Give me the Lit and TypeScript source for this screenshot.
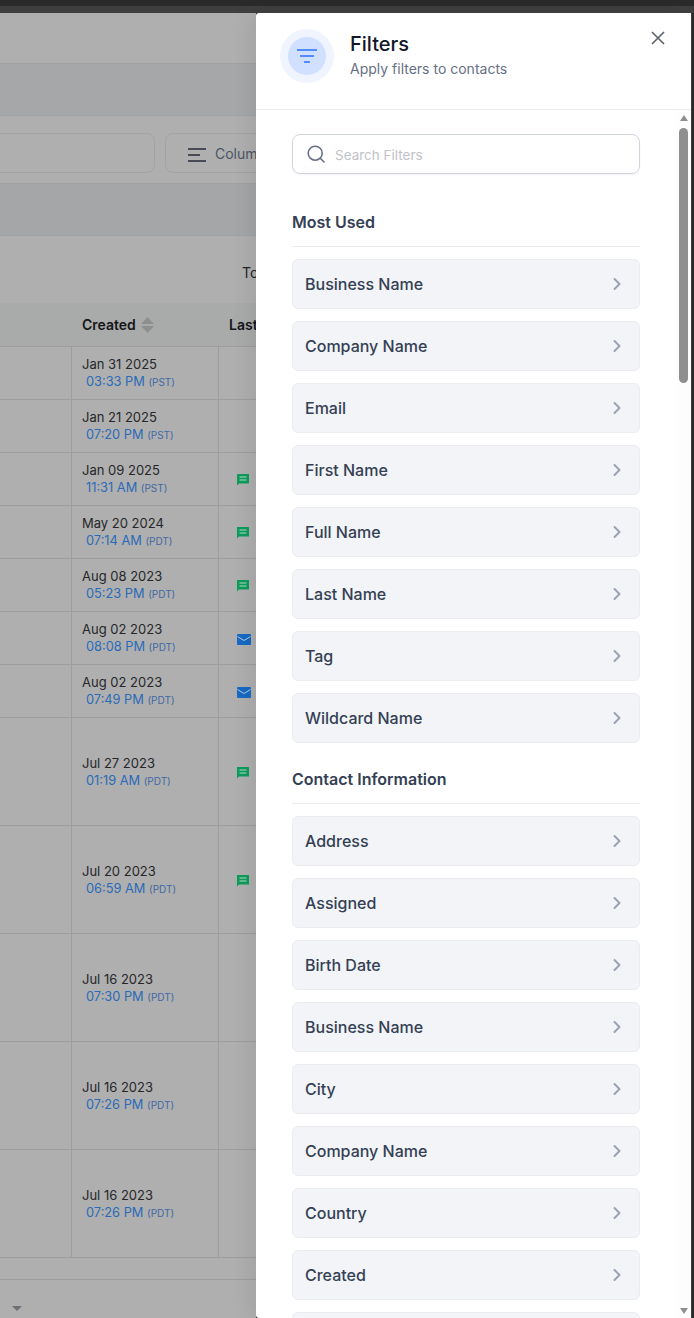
import { LitElement, html, css, svg } from "lit";
import { customElement } from "lit/decorators.js";
import { classMap } from "lit/directives/class-map.js";

const mostUsed = ["Business Name", "Company Name", "Email", "First Name", "Full Name", "Last Name", "Tag", "Wildcard Name"];
const contactInfo = ["Address", "Assigned", "Birth Date", "Business Name", "City", "Company Name", "Country", "Created", "Date of Birth"];

type Row = { d: string; t: string; z: string; h: number; icon?: "chat" | "mail" };
const rows: Row[] = [
  { d: "Jan 31 2025", t: "03:33 PM", z: "(PST)", h: 53 },
  { d: "Jan 21 2025", t: "07:20 PM", z: "(PST)", h: 53 },
  { d: "Jan 09 2025", t: "11:31 AM", z: "(PST)", h: 53, icon: "chat" },
  { d: "May 20 2024", t: "07:14 AM", z: "(PDT)", h: 53, icon: "chat" },
  { d: "Aug 08 2023", t: "05:23 PM", z: "(PDT)", h: 53, icon: "chat" },
  { d: "Aug 02 2023", t: "08:08 PM", z: "(PDT)", h: 53, icon: "mail" },
  { d: "Aug 02 2023", t: "07:49 PM", z: "(PDT)", h: 53, icon: "mail" },
  { d: "Jul 27 2023", t: "01:19 AM", z: "(PDT)", h: 108, icon: "chat" },
  { d: "Jul 20 2023", t: "06:59 AM", z: "(PDT)", h: 108, icon: "chat" },
  { d: "Jul 16 2023", t: "07:30 PM", z: "(PDT)", h: 108 },
  { d: "Jul 16 2023", t: "07:26 PM", z: "(PDT)", h: 108 },
  { d: "Jul 16 2023", t: "07:26 PM", z: "(PDT)", h: 108 },
];

const chevron = svg`<path d="M9 6l6 6-6 6" fill="none" stroke="#98a2b3" stroke-width="2.4" stroke-linecap="round" stroke-linejoin="round"/>`;

@customElement("app-root")
export class AppRoot extends LitElement {
  static styles = css`
    :host {
      display: block;
      width: 694px;
      height: 1318px;
      overflow: hidden;
      background: #2a2a2a;
      font-family: Inter, "Liberation Sans", sans-serif;
    }
    .chrome {
      height: 13px;
      box-sizing: border-box;
      border-top: 6px solid #2a2a2a;
      background: #3f3f3f;
    }
    .main {
      display: flex;
      height: 1305px;
    }
    .under {
      width: 256px;
      flex: none;
      overflow: hidden;
      background: #afafaf;
      color: #1b1c1e;
      display: flex;
      flex-direction: column;
    }
    .band { flex: none; box-sizing: border-box; border-bottom: 1px solid #a0a1a3; }
    .b1 { height: 51px; }
    .b2 { height: 52px; background: #a6a7a9; }
    .b3 {
      height: 68px;
      display: flex;
      align-items: center;
      justify-content: flex-end;
      gap: 10px;
      padding-top: 6px;
      margin-right: -59px;
    }
    .box {
      height: 40px;
      box-sizing: border-box;
      border: 1px solid #a2a3a5;
      border-radius: 8px;
    }
    .box.search { width: 190px; margin-left: -35px; }
    .box.cols {
      width: 150px;
      display: flex;
      align-items: center;
      gap: 8px;
      padding: 2px 0 0 21px;
      color: #4b5563;
      font-size: 14px;
    }
    .cols svg { margin-top: 2px; }
    .b4 { height: 52px; background: #a5a6a8; }
    .b5 {
      height: 67px;
      border: 0;
      display: flex;
      align-items: center;
      padding: 5px 0 0 242px;
      font-size: 14px;
      white-space: nowrap;
      color: #20242c;
    }
    .thead {
      height: 44px;
      flex: none;
      box-sizing: border-box;
      background: #a9abaa;
      border-bottom: 1px solid #9c9d9d;
      display: grid;
      grid-template-columns: 72px 147px 1fr;
      align-items: center;
      font-size: 14px;
      font-weight: 600;
      white-space: nowrap;
      color: #15161a;
    }
    .hcell { display: flex; align-items: center; gap: 5px; padding-left: 10px; }
    .row {
      flex: none;
      box-sizing: border-box;
      border-bottom: 1px solid #9d9d9d;
      display: grid;
      grid-template-columns: 72px 147px 1fr;
    }
    .cell { border-right: 1px solid #9d9d9d; }
    .cell:last-child { border: 0; display: flex; align-items: center; padding: 2px 0 0 18px; }
    .datecell {
      padding-left: 10px;
      display: flex;
      flex-direction: column;
      justify-content: center;
      font-size: 13px;
      line-height: 17px;
      white-space: nowrap;
      color: #26272a;
    }
    .tall .datecell { padding-top: 2px; }
    .time { padding-left: 4px; color: #2a6bb8; font-size: 12.8px; }
    .zone { font-size: 10px; color: #3f68a5; }
    .tail { height: 22px; flex: none; box-sizing: border-box; border-bottom: 1px solid #9d9d9d; }
    .foot { flex: 1; position: relative; padding: 26px 0 0 12px; }
    .caret {
      width: 0; height: 0;
      border-left: 5px solid transparent;
      border-right: 5px solid transparent;
      border-top: 5px solid #6e7075;
    }

    .panel {
      width: 435px;
      flex: none;
      background: #fff;
      border-radius: 3px 0 0 3px;
      display: flex;
      flex-direction: column;
      box-shadow: -6px 0 20px rgba(0, 0, 0, 0.08);
      position: relative;
    }
    .phead {
      height: 97px;
      flex: none;
      box-sizing: border-box;
      border-bottom: 1px solid #eaecf0;
      display: flex;
      padding: 16px 24px 0;
      gap: 16px;
    }
    .halo {
      width: 54px; height: 54px;
      border-radius: 50%;
      background: #eff4ff;
      display: flex;
      align-items: center;
      justify-content: center;
      flex: none;
    }
    .halo > div {
      width: 38px; height: 38px;
      border-radius: 50%;
      background: #d1e0ff;
      display: flex;
      align-items: center;
      justify-content: center;
    }
    .titles { flex: 1; padding-top: 2px; }
    .title { font-size: 20px; line-height: 26px; font-weight: 500; color: #101828; }
    .sub { font-size: 14px; line-height: 20px; color: #667085; margin-top: 2px; }
    .close { margin: -3px -3px 0 0; width: 24px; height: 24px; flex: none; }
    .pbody { flex: 1; display: flex; min-height: 0; }
    .content { flex: 1; overflow: hidden; padding: 24px 36px 0; min-width: 0; }
    .field {
      height: 40px;
      box-sizing: border-box;
      border: 1px solid #d0d5dd;
      border-radius: 8px;
      box-shadow: 0 1px 2px rgba(16, 24, 40, 0.05);
      display: flex;
      align-items: center;
      gap: 9px;
      padding-left: 13px;
      font-size: 13.5px;
      color: #c0c2c6;
    }
    .field span { padding-top: 2px; }
    .sec {
      font-size: 16px;
      line-height: 24px;
      font-weight: 600;
      color: #344054;
      border-bottom: 1px solid #eaecf0;
      padding-bottom: 12px;
      margin-bottom: 12px;
    }
    .sec.first { margin-top: 36px; }
    .sec.next { margin-top: 24px; }
    .list { display: flex; flex-direction: column; gap: 12px; }
    .item {
      height: 50px;
      box-sizing: border-box;
      border: 1px solid #eaecf0;
      border-radius: 6px;
      background: #f2f4f7;
      display: flex;
      align-items: center;
      justify-content: space-between;
      padding: 0 12px;
      font-size: 16px;
      font-weight: 500;
      color: #344054;
    }
    .bar {
      width: 15px;
      flex: none;
      background: #fdfdfd;
      display: flex;
      flex-direction: column;
      align-items: center;
      padding: 5px 0 4px;
      box-sizing: border-box;
    }
    .up, .down {
      width: 0; height: 0;
      border-left: 4.5px solid transparent;
      border-right: 4.5px solid transparent;
    }
    .up { border-bottom: 6px solid #8f8f8f; }
    .down { border-top: 6px solid #8f8f8f; margin-top: auto; }
    .thumb {
      width: 9px;
      height: 255px;
      border-radius: 5px;
      background: #8f8f8f;
      margin-top: 7px;
    }
    .edge { flex: 1; background: #2a2a2a; border-left: 1px solid #3f3f3f; }
  `;

  private hcols() {
    return html`<svg width="20" height="14" viewBox="0 0 20 14" fill="none" stroke="#464b55" stroke-width="2"><path d="M1 1h18M1 7h12M1 13h18"/></svg>`;
  }

  private sort() {
    return html`<svg width="13" height="16" viewBox="0 0 13 16" fill="#8d8e8e"><path d="M6.5 0L13 7H0zM0 9h13l-6.5 7z"/></svg>`;
  }

  private rowIcon(i?: "chat" | "mail") {
    if (i === "chat")
      return html`<svg width="12" height="12" viewBox="0 0 12 12"><path d="M0 0h12v9.5H2L0 11.5z" fill="#0d9c5c"/><path d="M2.5 3h7M2.5 6h7" stroke="#b9d8c8" stroke-width="1"/></svg>`;
    if (i === "mail")
      return html`<svg width="14" height="11" viewBox="0 0 14 11"><rect width="14" height="11" rx="1" fill="#1769c4"/><path d="M.5 2.5L7 6.5l6.5-4" fill="none" stroke="#b5c9df" stroke-width="1"/></svg>`;
    return "";
  }

  private item(n: string) {
    return html`<div class="item">
      <span>${n}</span>
      <svg width="20" height="20" viewBox="0 0 24 24">${chevron}</svg>
    </div>`;
  }

  render() {
    return html`
      <div class="chrome"></div>
      <div class="main">
        <div class="under">
          <div class="band b1"></div>
          <div class="band b2"></div>
          <div class="band b3">
            <div class="box search"></div>
            <div class="box cols">${this.hcols()}<span>Columns</span></div>
          </div>
          <div class="band b4"></div>
          <div class="band b5">Total</div>
          <div class="thead">
            <div></div>
            <div class="hcell">Created ${this.sort()}</div>
            <div class="hcell">Last Activity</div>
          </div>
          ${rows.map(
            (r) => html`<div class=${classMap({ row: true, tall: r.h > 53 })} style="height:${r.h}px">
              <div class="cell"></div>
              <div class="cell datecell">
                <div>${r.d}</div>
                <div class="time">${r.t} <span class="zone">${r.z}</span></div>
              </div>
              <div class="cell">${this.rowIcon(r.icon)}</div>
            </div>`
          )}
          <div class="tail"></div>
          <div class="foot"><div class="caret"></div></div>
        </div>
        <div class="panel">
          <div class="phead">
            <div class="halo"><div>
              <svg width="24" height="24" viewBox="0 0 24 24" fill="none" stroke="#2970ff" stroke-width="1.7"><path d="M2 6h20M5 12h14M9 18h6"/></svg>
            </div></div>
            <div class="titles">
              <div class="title">Filters</div>
              <div class="sub">Apply filters to contacts</div>
            </div>
            <svg class="close" viewBox="0 0 24 24" fill="none" stroke="#5a5f68" stroke-width="1.6"><path d="M6 6l12 12M18 6L6 18"/></svg>
          </div>
          <div class="pbody">
            <div class="content">
              <div class="field">
                <svg width="20" height="20" viewBox="0 0 20 20" fill="none" stroke="#667085" stroke-width="1.6" stroke-linecap="round"><circle cx="9.2" cy="9.2" r="7"/><path d="M14.5 14.5L18 18"/></svg>
                <span>Search Filters</span>
              </div>
              <div class="sec first">Most Used</div>
              <div class="list">${mostUsed.map((n) => this.item(n))}</div>
              <div class="sec next">Contact Information</div>
              <div class="list">${contactInfo.map((n) => this.item(n))}</div>
            </div>
            <div class="bar">
              <div class="up"></div>
              <div class="thumb"></div>
              <div class="down"></div>
            </div>
          </div>
        </div>
        <div class="edge"></div>
      </div>
    `;
  }
}
